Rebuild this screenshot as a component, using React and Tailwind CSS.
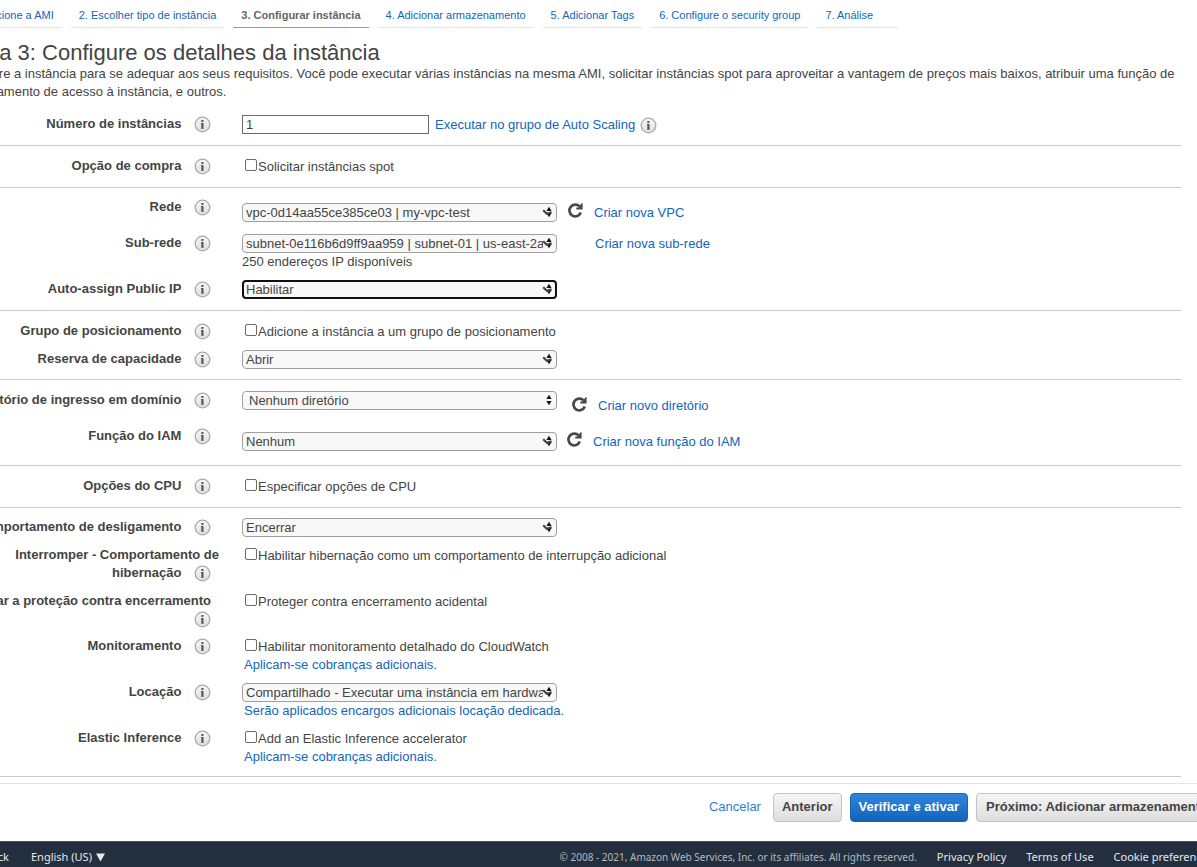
import React from "react";

const tabs = [
  "1. Selecione a AMI",
  "2. Escolher tipo de instância",
  "3. Configurar instância",
  "4. Adicionar armazenamento",
  "5. Adicionar Tags",
  "6. Configure o security group",
  "7. Análise",
];

function InfoIcon() {
  return (
    <svg width="17" height="17" viewBox="0 0 17 17" aria-hidden="true">
      <defs>
        <linearGradient id="infoFill" x1="0" y1="0" x2="0" y2="1">
          <stop offset="0" stopColor="#f8f8f8" />
          <stop offset="1" stopColor="#dedede" />
        </linearGradient>
      </defs>
      <circle cx="8.5" cy="8.5" r="7.3" fill="url(#infoFill)" stroke="#aaaaaa" strokeWidth="1.3" />
      <rect x="7.3" y="4" width="2.2" height="1.9" fill="#555" />
      <path d="M6.9 6.9h2.6v5.6H7.3V7.8h-.4z" fill="#555" />
      <path d="M7 12h2.9v.8H7z" fill="#777" />
    </svg>
  );
}

function InfoButton({ className, topic }) {
  return (
    <button type="button" aria-label={`Informações: ${topic}`} className={className}>
      <InfoIcon />
    </button>
  );
}

function RefreshButton({ label }) {
  return (
    <button type="button" aria-label={label} className="shrink-0">
      <svg width="17" height="17" viewBox="0 0 17 17" aria-hidden="true">
        <path d="M12.6 4.4A5.9 5.9 0 1 0 13.8 10.6" fill="none" stroke="#484848" strokeWidth="2.7" />
        <path d="M15.6 1.2v6.3H9.3V5.6h2.2l3-4.4z" fill="#484848" />
      </svg>
    </button>
  );
}

function Link({ children, className = "" }) {
  return (
    <a href="#" className={`text-[#1166bb] ${className}`}>
      {children}
    </a>
  );
}

function Row({ id, label, short, height = "min-h-[19px]", children }) {
  return (
    <div className={`grid grid-cols-[265px_1fr] gap-x-[23px] ${height}`}>
      <div className="text-right leading-[18px]">
        <label htmlFor={id} className={`font-bold ${short ? "pr-2" : ""}`}>
          {label}
        </label>{" "}
        <InfoButton topic={label} className="ml-[9px] mr-2 inline-block h-[16px] align-[-4px]" />
      </div>
      <div className="min-w-0">{children}</div>
    </div>
  );
}

function Select({ id, value, focused, plain }) {
  return (
    <div className="relative w-[315px] shrink-0">
      <select
        id={id}
        className={`block h-[19px] w-full appearance-none rounded-[4px] bg-[#f8f8f8] pr-[13px] leading-[16px] outline-none ${
          focused ? "border-2 border-[#101010] pl-[2px]" : "border border-[#a0a0a0]"
        } ${plain ? "pl-[6px]" : focused ? "" : "pl-[3px]"}`}
      >
        <option>{value}</option>
      </select>
      <svg className="pointer-events-none absolute right-[4px] top-[3px]" width="11" height="12" viewBox="0 0 11 12" aria-hidden="true">
        <path d="M4.4 4.9L7 0.8L9.6 4.9zM4.4 7.1H9.6L7 11.2z" fill="#111" />
        {plain ? null : <path d="M1.2 4.2L4.8 7.8L9.6 6.2" fill="none" stroke="#444" strokeWidth="2.1" />}
      </svg>
    </div>
  );
}

function Check({ id, children }) {
  return (
    <div className="flex items-start pl-[3px] pt-px leading-[18px]">
      <input
        id={id}
        type="checkbox"
        className="mt-px size-3 shrink-0 appearance-none rounded-[2px] border border-[#6b6b6b] bg-white"
      />
      <label htmlFor={id} className="pl-px">
        {children}
      </label>
    </div>
  );
}

function Section({ children, className = "pt-[11px] pb-[11px]" }) {
  return <section className={`flex flex-col gap-[9px] border-b border-[#cccccc] ${className}`}>{children}</section>;
}

export default function App() {
  return (
    <div className="overflow-hidden bg-white font-['Liberation_Sans',Arial,sans-serif] text-[13px] leading-[18px] text-[#444444]">
      <div className="-ml-[46px] mr-4">
        <nav className="flex gap-[9px] whitespace-nowrap text-[11px]">
          {tabs.map((t, i) => (
            <a
              key={t}
              href="#"
              aria-current={i === 2 ? "step" : undefined}
              className={`min-w-[81px] border-b px-2 pb-[3px] pt-[6px] ${
                i === 2 ? "border-[#ee8a1d] font-bold text-[#666666]" : "border-[#e2e2e2] text-[#1166bb]"
              }`}
            >
              {t}
            </a>
          ))}
        </nav>
        <h1 className="mt-3 text-[22px] leading-[25px]">Etapa 3: Configure os detalhes da instância</h1>
        <p>
          Configure a instância para se adequar aos seus requisitos. Você pode executar várias instâncias na mesma AMI,
          solicitar instâncias spot para aproveitar a vantagem de preços mais baixos, atribuir uma função de
          gerenciamento de acesso à instância, e outros.
        </p>

        <form>
          <Section className="pt-[14px] pb-[11px]">
            <Row id="count" label="Número de instâncias">
              <div className="flex items-center">
                <input id="count" type="text" defaultValue="1" className="h-[19px] w-[187px] border border-[#6b6b6b] px-[3px]" />
                <Link className="ml-[6px]">Executar no grupo de Auto Scaling</Link>
                <InfoButton topic="Auto Scaling" className="ml-[5px] h-[16px]" />
              </div>
            </Row>
          </Section>

          <Section>
            <Row id="spot" label="Opção de compra">
              <Check id="spot">Solicitar instâncias spot</Check>
            </Row>
          </Section>

          <Section className="pt-[10px] pb-[11px]">
            <Row id="vpc" label="Rede" height="min-h-[27px]">
              <div className="flex items-center pt-[5px]">
                <Select id="vpc" value="vpc-0d14aa55ce385ce03 | my-vpc-test" />
                <div className="-mt-1 ml-[10px] h-[17px]">
                  <RefreshButton label="Atualizar redes" />
                </div>
                <Link className="ml-[10px]">Criar nova VPC</Link>
              </div>
            </Row>
            <Row id="subnet" label="Sub-rede">
              <div className="flex items-center">
                <Select id="subnet" value="subnet-0e116b6d9ff9aa959 | subnet-01 | us-east-2a" />
                <Link className="ml-[38px]">Criar nova sub-rede</Link>
              </div>
              <div>250 endereços IP disponíveis</div>
            </Row>
            <Row id="publicip" label="Auto-assign Public IP">
              <Select id="publicip" value="Habilitar" focused />
            </Row>
          </Section>

          <Section className="pt-[11px] pb-[10px]">
            <Row id="placement" label="Grupo de posicionamento">
              <Check id="placement">Adicione a instância a um grupo de posicionamento</Check>
            </Row>
            <Row id="capacity" label="Reserva de capacidade">
              <Select id="capacity" value="Abrir" />
            </Row>
          </Section>

          <Section>
            <Row id="directory" label="Diretório de ingresso em domínio" height="min-h-[27px]">
              <div className="flex items-start">
                <Select id="directory" value="Nenhum diretório" plain />
                <div className="ml-[14px] flex items-center pt-[6px]">
                  <div className="-mt-1 h-[17px]">
                    <RefreshButton label="Atualizar diretórios" />
                  </div>
                  <Link className="ml-[10px]">Criar novo diretório</Link>
                </div>
              </div>
            </Row>
            <Row id="iam" label="Função do IAM" height="min-h-[27px]">
              <div className="flex items-center pt-[5px]">
                <Select id="iam" value="Nenhum" />
                <div className="-mt-1 ml-[9px] h-[17px]">
                  <RefreshButton label="Atualizar funções" />
                </div>
                <Link className="ml-[10px]">Criar nova função do IAM</Link>
              </div>
            </Row>
          </Section>

          <Section>
            <Row id="cpu" label="Opções do CPU">
              <Check id="cpu">Especificar opções de CPU</Check>
            </Row>
          </Section>

          <Section className="pt-[10px] pb-[10px]">
            <Row id="shutdown" label="Comportamento de desligamento">
              <Select id="shutdown" value="Encerrar" />
            </Row>
            <Row id="hibernate" label="Interromper - Comportamento de hibernação" height="min-h-[37px]">
              <Check id="hibernate">Habilitar hibernação como um comportamento de interrupção adicional</Check>
            </Row>
            <Row id="protect" label="Habilitar a proteção contra encerramento" short>
              <Check id="protect">Proteger contra encerramento acidental</Check>
            </Row>
            <Row id="monitor" label="Monitoramento">
              <Check id="monitor">Habilitar monitoramento detalhado do CloudWatch</Check>
              <Link className="block pl-[2px]">Aplicam-se cobranças adicionais.</Link>
            </Row>
            <Row id="tenancy" label="Locação">
              <Select id="tenancy" value="Compartilhado - Executar uma instância em hardware compartilhado" />
              <Link className="block pl-[2px]">Serão aplicados encargos adicionais locação dedicada.</Link>
            </Row>
            <Row id="elastic" label="Elastic Inference">
              <Check id="elastic">Add an Elastic Inference accelerator</Check>
              <Link className="block pl-[2px]">Aplicam-se cobranças adicionais.</Link>
            </Row>
          </Section>
        </form>
      </div>

      <div className="mt-[6px] flex items-center justify-end border-t border-[#e6e6e6] pb-[19px] pt-[9px] -mr-[21px] whitespace-nowrap font-bold">
        <a href="#" className="mr-3 pb-[2px] font-normal text-[#2e7fd6]">
          Cancelar
        </a>
        <button type="button" className="mr-2 h-[29px] rounded-[4px] border border-[#c3c3c3] bg-linear-to-b from-[#f5f5f5] to-[#dedede] px-2 pb-[2px]">
          Anterior
        </button>
        <button type="button" className="mr-2 h-[29px] rounded-[4px] border border-[#1c63b0] bg-linear-to-b from-[#2f86dd] to-[#1163bb] px-2 pb-[2px] text-white">
          Verificar e ativar
        </button>
        <button type="button" className="h-[29px] rounded-[4px] border border-[#c3c3c3] bg-linear-to-b from-[#f5f5f5] to-[#dedede] px-[9px] pb-[2px]">
          Próximo: Adicionar armazenamento
        </button>
      </div>

      <footer className="flex items-center justify-between whitespace-nowrap border-t border-[#4a5058] bg-[#232f3e] pb-5 pt-[6px] -ml-[46px] -mr-[16px] font-['Noto_Sans','Open_Sans',sans-serif] text-[11px] text-[#e6e8ea]">
        <div className="flex gap-[22px] pl-[6px]">
          <a href="#">Feedback</a>
          <button type="button" className="flex items-center gap-1">
            English (US)
            <svg width="9" height="9" viewBox="0 0 9 9" aria-hidden="true">
              <path d="M0 0.5h9L4.5 8.5z" fill="currentColor" />
            </svg>
          </button>
        </div>
        <div className="flex items-center">
          <span className="mr-5 text-[10px] text-[#b4babf]">
            © 2008 - 2021, Amazon Web Services, Inc. or its affiliates. All rights reserved.
          </span>
          <a href="#" className="mr-5">Privacy Policy</a>
          <a href="#" className="mr-5">Terms of Use</a>
          <a href="#">Cookie preferences</a>
        </div>
      </footer>
    </div>
  );
}
